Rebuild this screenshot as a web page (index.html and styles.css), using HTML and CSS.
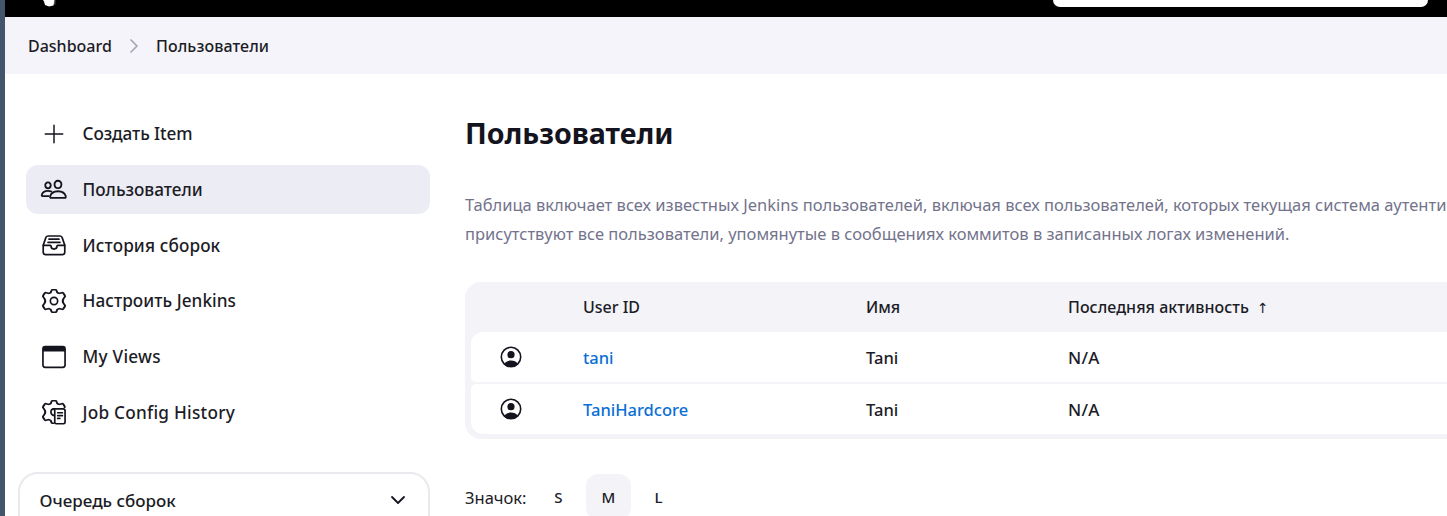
FILE: index.html
```html
<!DOCTYPE html>
<html lang="ru">
<head>
<meta charset="utf-8">
<title>Пользователи - Jenkins</title>
<link rel="stylesheet" href="styles.css">
</head>
<body>
<div class="app">
  <header class="topbar">
    <svg class="logo" width="20" height="17" viewBox="0 0 20 17"><path d="M3 0H14.500L13.500 5.500 9 6.500 5 5 4 1.500z" fill="#fff"/><path d="M14.800 0v4.500" fill="none" stroke="#888" stroke-width=".8"/></svg>
    <div class="search"></div>
  </header>
  <nav class="crumbs">
    <span class="crumb-home">Dashboard</span>
    <svg width="10" height="14" viewBox="0 0 10 14" fill="none" stroke="#a7a6b3" stroke-width="1.700" stroke-linecap="round" stroke-linejoin="round"><path d="M2 1l6 6-6 6"/></svg>
    <span class="crumb-here">Пользователи</span>
  </nav>
  <div class="body">
    <aside class="side">
      <div class="tasks">
        <a class="task"><svg class="ico plus" viewBox="0 0 512 512"><path d="M256 84v344M428 256H84"/></svg><span class="t1">Создать Item</span></a>
        <a class="task active"><svg class="ico" viewBox="0 0 512 512"><path d="M402 168c-3 41-34 72-68 72s-65-31-68-72c-3-43 27-74 68-74s71 32 68 74z"/><path d="M334 300c-74 0-139 37-155 105-3 13 6 27 19 27h272c13 0 22-14 19-27-16-70-81-105-155-105z"/><path d="M192 185c-3 33-27 58-54 58s-52-25-54-58c-3-34 21-58 54-58s56 25 54 58z"/><path d="M202 306c-20-10-42-14-66-14-57 0-109 29-122 83-3 11 5 21 15 21h120"/></svg><span class="t2">Пользователи</span></a>
        <a class="task"><svg class="ico small" viewBox="0 0 512 512"><path d="M384 64H128c-26 0-43 14-48 40L26 262v150a48 48 0 0048 48h364a48 48 0 0048-48V262l-54-158c-5-27-23-40-48-40z"/><path d="M26 262h150c10 0 16 8 16 16a64 64 0 00128 0c0-8 6-16 16-16h150M150 132h212M128 198h256"/></svg><span class="t3">История сборок</span></a>
        <a class="task"><svg class="ico small" viewBox="0 0 512 512"><circle cx="256" cy="256" r="78"/><path transform="matrix(1.170 0 0 1 -43.500 0)" d="M210 32Q213 16 232 16H280Q299 16 302 32L313 69Q320 80 334 86Q349 93 362 91L401 80Q416 76 426 91L454 139Q464 155 452 169L430 205Q400 256 430 307L452 343Q464 357 454 373L426 421Q416 436 401 432L362 421Q349 419 334 426Q320 432 313 443L302 480Q299 496 280 496H232Q213 496 210 480L199 443Q192 432 178 426Q163 419 150 421L111 432Q96 436 86 421L58 373Q48 357 60 343L82 307Q112 256 82 205L60 169Q48 155 58 139L86 91Q96 76 111 80L150 91Q163 93 178 86Q192 80 199 69Z"/></svg><span class="t4">Настроить Jenkins</span></a>
        <a class="task"><svg class="ico small" viewBox="0 0 512 512"><rect x="20" y="36" width="472" height="440" rx="48"/><path fill="#14141f" stroke="none" d="M20 138V84a48 48 0 0148-48h376a48 48 0 0148 48v54z"/></svg><span class="t5">My Views</span></a>
        <a class="task"><svg class="ico small" viewBox="0 0 512 512"><path transform="matrix(1.170 0 0 1 -43.500 0)" d="M248 496H232Q213 496 210 480L199 443Q192 432 178 426Q163 419 150 421L111 432Q96 436 86 421L58 373Q48 357 60 343L82 307Q112 256 82 205L60 169Q48 155 58 139L86 91Q96 76 111 80L150 91Q163 93 178 86Q192 80 199 69L210 32Q213 16 232 16H280Q299 16 302 32L313 69Q320 80 334 86Q349 93 362 91L401 80Q416 76 426 91L450 135Q456 148 450 158"/><path d="M265 332c-100-8-95-142-15-142h200q42 0 42 42v238q0 36-36 36H306q-34 0-34-36V232q0-42-36-42M335 272h100M335 332h100M335 392h45"/></svg><span class="t6">Job Config History</span></a>
      </div>
      <section class="queue"><span class="tq">Очередь сборок</span>
        <svg width="16" height="10" viewBox="0 0 16 10" fill="none" stroke="#14141f" stroke-width="1.800" stroke-linecap="round" stroke-linejoin="round"><path d="M2 2l6 6 6-6"/></svg></section>
    </aside>
    <main class="main">
      <h1>Пользователи</h1>
      <p class="desc"><span class="d1">Таблица включает всех известных Jenkins пользователей, включая всех пользователей, которых текущая система аутенти</span><br><span class="d2">присутствуют все пользователи, упомянутые в сообщениях коммитов в записанных логах изменений.</span></p>
      <div class="table">
        <div class="row head"><span></span><span>User ID</span><span>Имя</span><span class="sorted"><span class="h3c">Последняя активность</span><span class="arrow">↑</span></span></div>
        <div class="row first"><svg class="person" viewBox="0 0 22 22"><circle cx="11" cy="11" r="9.700" fill="none" stroke="#14141f" stroke-width="1.600"/><circle cx="11" cy="8.700" r="3.600"/><path d="M4 18.200C5.500 15.500 8 14.600 11 14.600s5.500.9 7 3.600c-2 2-4.500 2.900-7 2.900s-5-.9-7-2.900z"/></svg><a>tani</a><span>Tani</span><span class="na">N/A</span></div>
        <div class="row last"><svg class="person" viewBox="0 0 22 22"><circle cx="11" cy="11" r="9.700" fill="none" stroke="#14141f" stroke-width="1.600"/><circle cx="11" cy="8.700" r="3.600"/><path d="M4 18.200C5.500 15.500 8 14.600 11 14.600s5.500.9 7 3.600c-2 2-4.500 2.900-7 2.900s-5-.9-7-2.900z"/></svg><a>TaniHardcore</a><span>Tani</span><span class="na">N/A</span></div>
      </div>
      <div class="sizes"><span class="label">Значок:</span><a class="size">S</a><a class="size on">M</a><a class="size">L</a></div>
    </main>
  </div>
</div>
</body>
</html>
```
FILE: styles.css
```css
* { box-sizing: border-box; }
body { margin: 0; background: #fff; color: #1c1c26; font-family: "Noto Sans", "Open Sans", sans-serif; font-size: 16.5px; font-weight: 500; }
.app { width: 1447px; height: 516px; overflow: hidden; border-left: 5px solid #44546b; }
.topbar { height: 17px; background: #000; display: flex; justify-content: space-between; padding: 0 19px 0 35px; }
.search { width: 375px; height: 7px; background: #fff; border-radius: 0 0 8px 8px; }
.crumbs { height: 57px; background: #f4f4fa; display: flex; align-items: center; padding-left: 23px; }
.crumbs svg { margin: 0 17px 0 18px; }
.crumbs span { font-size: 16px; white-space: nowrap; }
.crumb-home { width: 83px; }
.crumbs .crumb-here { letter-spacing: 0.1px; }
.body { display: flex; }
.side { width: 425px; flex: none; padding: 35px 0 0 13px; }
.tasks { display: grid; gap: 6.8px; padding-left: 8px; width: 412px; }
.task { height: 49px; display: flex; align-items: center; gap: 15.5px; padding-left: 15px; border-radius: 12px; white-space: nowrap; font-size: 17.2px; }
.t1 { letter-spacing: -0.1px; padding-bottom: 1px; }
.t3 { letter-spacing: 0.12px; }
.t4 { letter-spacing: 0.05px; }
.t5, .t6 { letter-spacing: 0.25px; }
.active { background: #ececf5; }
.ico { width: 26px; height: 26px; flex: none; overflow: visible; fill: none; stroke: #14141f; stroke-width: 36; stroke-linecap: round; stroke-linejoin: round; }
.small { width: 24px; height: 24px; margin: 0 1px; stroke-width: 36; }
.plus { stroke-width: 29; }
.queue { margin-top: 35px; height: 80px; width: 412px; border: 2px solid #e9e9ee; border-radius: 20px; display: flex; justify-content: space-between; align-items: flex-start; padding: 15px 22px 0 19.5px; font-size: 17px; }
.queue svg { margin-top: 6px; }
.main { flex: 1; min-width: 0; padding-left: 35px; white-space: nowrap; overflow: hidden; }
h1 { margin: 39px 0 0; font-size: 28.6px; line-height: 40px; font-weight: 700; color: #14141f; }
.desc { margin: 37px 0 0; font-size: 16.5px; line-height: 29px; font-weight: 400; color: #73738c; }
.table { margin-top: 34px; height: 157px; width: 1100px; background: #f3f3f8; border-radius: 16px; padding: 0 6px; }
.row { display: grid; grid-template-columns: 112px 283px 202px 1fr; height: 50px; align-items: center; background: #fff; border-radius: 5px; margin-bottom: 2px; }
.head { background: none; font-size: 16px; margin-bottom: 0; }
.first { border-radius: 12px 12px 5px 5px; }
.last { border-radius: 5px 5px 12px 12px; }
.person { width: 22px; height: 22px; margin-left: 29px; fill: #14141f; }
.table a { color: #0b6fd6; }
.na { font-size: 17px; letter-spacing: 0.3px; }
.h3c { letter-spacing: 0.05px; }
.sorted { display: flex; align-items: center; }
.arrow { font-family: "DejaVu Sans", sans-serif; font-size: 14px; line-height: 20px; font-weight: 400; margin-left: 8px; padding-top: 1px; }
.sizes { display: flex; align-items: center; height: 46px; margin-top: 35px; }
.label { font-weight: 400; width: 71px; }
.size { width: 45px; height: 46px; border-radius: 12px; font-size: 15px; text-align: center; line-height: 46px; margin-right: 5px; }
.on { background: #f3f3f8; }
```
